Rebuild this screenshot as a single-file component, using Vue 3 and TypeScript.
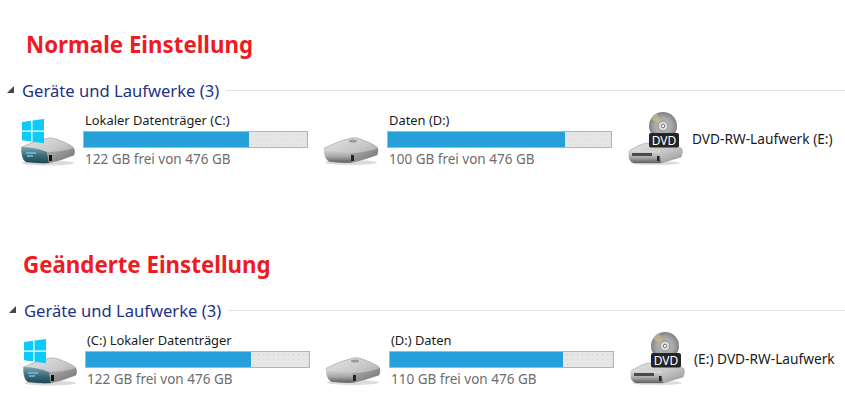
<script setup lang="ts">
type Drive = { icon: 'win' | 'hdd' | 'dvd'; name: string; free?: string; pct?: number }
type Section = { title: string; drives: Drive[]; cls: string }
const sections: Section[] = [
  { title: 'Normale Einstellung', cls: 'normal', drives: [
    { icon: 'win', name: 'Lokaler Datenträger (C:)', free: '122 GB frei von 476 GB', pct: 74 },
    { icon: 'hdd', name: 'Daten (D:)', free: '100 GB frei von 476 GB', pct: 79.400 },
    { icon: 'dvd', name: 'DVD-RW-Laufwerk (E:)' },
  ] },
  { title: 'Geänderte Einstellung', cls: 'changed', drives: [
    { icon: 'win', name: '(C:) Lokaler Datenträger', free: '122 GB frei von 476 GB', pct: 74 },
    { icon: 'hdd', name: '(D:) Daten', free: '110 GB frei von 476 GB', pct: 77.500 },
    { icon: 'dvd', name: '(E:) DVD-RW-Laufwerk' },
  ] },
]
</script>

<template>
  <div class="page">
    <svg width="0" height="0" class="defs" aria-hidden="true">
      <defs>
        <linearGradient id="hddTop" x1="0" y1="0" x2="1" y2="1">
          <stop offset="0" stop-color="#e6e6e6" /><stop offset=".55" stop-color="#c6c6c6" /><stop offset="1" stop-color="#939393" />
        </linearGradient>
        <linearGradient id="hddFront" x1="0" y1="0" x2="0" y2="1">
          <stop offset="0" stop-color="#dcdcdc" /><stop offset=".55" stop-color="#a8a8a8" /><stop offset="1" stop-color="#5e5e5e" />
        </linearGradient>
        <linearGradient id="hddSide" x1="0" y1="0" x2="1" y2="1">
          <stop offset="0" stop-color="#b4b4b4" /><stop offset="1" stop-color="#6c6c6c" />
        </linearGradient>
        <linearGradient id="winFront" x1="0" y1="0" x2="0" y2="1">
          <stop offset="0" stop-color="#7fa5b0" /><stop offset=".5" stop-color="#3f6e7c" /><stop offset="1" stop-color="#1f4653" />
        </linearGradient>
        <radialGradient id="disc" cx=".5" cy=".5" r=".55">
          <stop offset="0" stop-color="#c8c8c8" /><stop offset=".6" stop-color="#a4a4a4" /><stop offset="1" stop-color="#767676" />
        </radialGradient>
      </defs>
    </svg>

    <section v-for="s in sections" :key="s.title" class="section" :class="s.cls">
      <h1 class="headline">{{ s.title }}</h1>
      <div class="group">
        <span class="arrow"></span>
        <span class="group-name">Geräte und Laufwerke (3)</span>
        <span class="rule"></span>
      </div>
      <div class="drives">
        <div v-for="d in s.drives" :key="d.name" class="drive">
          <svg v-if="d.icon === 'win'" class="icon" width="56" height="54" viewBox="0 0 56 54">
            <ellipse cx="28" cy="51" rx="26" ry="2.500" fill="#000" opacity=".14" />
            <path d="M1.500 35 Q14 29 28 26 Q32 25.500 36 27 Q46 30 53 35 Q55.500 38 54 43 Q42 48 29 51 Q16 51.500 6 50 Q1 47 1.500 35 Z" fill="url(#hddTop)" stroke="#8c8c8c" stroke-width=".5" />
            <path d="M1.500 35 Q14 35 27 40 L29 51 Q16 51.500 6 50 Q1 47 1.500 35 Z" fill="url(#winFront)" />
            <path d="M27 40 Q42 40 54 36 Q55 40 54 43 Q42 48 29 51 Z" fill="url(#hddSide)" />
            <rect x="29" y="43" width="3" height="6" fill="#111" />
            <path d="M6 41 h10 M7 44 h6" stroke="#6cc4e4" stroke-width="1.300" />
            <path d="M2 10 L11 8.800 V18.500 H2 Z M12.500 8.500 L24 7 V18.500 H12.500 Z M2 19.800 H11 V29.500 L2 28.300 Z M12.500 19.800 H24 V31.300 L12.500 29.800 Z" fill="#0ccbfb" />
          </svg>
          <svg v-else-if="d.icon === 'hdd'" class="icon" width="56" height="54" viewBox="0 0 56 54">
            <ellipse cx="27" cy="50.500" rx="26" ry="2.500" fill="#000" opacity=".14" />
            <path d="M0.500 36 Q14 29 27 26 Q32 25 36 27 Q46 30 53 35 Q55 38 53 43 Q42 47 28 50.500 Q15 51 5 49.500 Q0 46 0.500 36 Z" fill="url(#hddTop)" stroke="#8c8c8c" stroke-width=".5" />
            <path d="M0.500 37 Q14 37 26 41 L28 50.500 Q15 51 5 49.500 Q0 46 0.500 37 Z" fill="url(#hddFront)" />
            <path d="M26 41 Q42 41 54 36 Q54.500 40 53 43 Q42 47 28 50.500 Z" fill="url(#hddSide)" />
            <rect x="27" y="43" width="3" height="6" fill="#222" />
            <ellipse cx="29" cy="29" rx="4" ry="1.500" fill="#9a9a9a" />
          </svg>
          <svg v-else class="icon" width="56" height="54" viewBox="0 0 56 54">
            <ellipse cx="27" cy="51" rx="25" ry="2" fill="#000" opacity=".14" />
            <circle cx="35" cy="14" r="14" fill="url(#disc)" />
            <path d="M35 14 L23 7 A14 14 0 0 1 29 1.500 Z" fill="#c9b98a" opacity=".75" />
            <circle cx="35" cy="14" r="5" fill="#dedede" stroke="#8a8a8a" />
            <circle cx="35" cy="14" r="1.800" fill="#fff" stroke="#777" />
            <path d="M1 39 Q10 33 18 31 H46 L54 37 Q55 41 53 45 L33 51 H6 Q1 49 1 45 Z" fill="url(#hddTop)" stroke="#8c8c8c" stroke-width=".5" />
            <path d="M1 39 H32 L33 51 H6 Q1 49 1 45 Z" fill="url(#hddFront)" />
            <path d="M4 41 H24 V44 H4 Z" fill="#4a4a4a" />
            <rect x="29" y="44" width="2.500" height="5" fill="#222" />
            <rect x="21" y="21" width="30" height="14.500" rx="2" fill="#242424" />
            <text x="36" y="33" text-anchor="middle" class="dvd-label">DVD</text>
          </svg>
          <div v-if="d.pct !== undefined" class="info">
            <div class="name">{{ d.name }}</div>
            <div class="bar"><div class="fill" :style="{ width: d.pct + '%' }"></div></div>
            <div class="free">{{ d.free }}</div>
          </div>
          <div v-else class="name solo">{{ d.name }}</div>
        </div>
      </div>
    </section>
  </div>
</template>

<style>
html, body { margin: 0; background: #fff; }
</style>

<style scoped>
.page {
  width: 845px;
  height: 400px;
  overflow: hidden;
  background: #fff;
  font-family: "Noto Sans", "Open Sans", sans-serif;
}
.defs { position: absolute; }
.section { display: flex; flex-direction: column; }
.normal { padding: 30px 0 0 7px; height: 220px; box-sizing: border-box; }
.changed { padding: 30px 0 0 9px; }
.headline {
  margin: 0;
  height: 30px;
  line-height: 30px;
  font-size: 22.300px;
  font-weight: 700;
  color: #ed1c24;
}
.normal .headline { padding-left: 19px; }
.changed .headline { padding-left: 14px; }
.group {
  display: flex;
  align-items: center;
  height: 24px;
  margin-top: 18px;
}
.arrow {
  width: 0;
  height: 0;
  margin-top: -1px;
  border-left: 7px solid transparent;
  border-bottom: 7px solid #454545;
}
.group-name {
  margin-left: 8px;
  font-size: 16.600px;
  color: #1e3287;
  white-space: nowrap;
}
.rule { flex: 1; height: 1px; margin-left: 7px; background: #e2e2e2; }
.drives { display: flex; margin: 9px 0 0 13px; }
.drive {
  flex: 0 0 304px;
  display: flex;
  align-items: flex-start;
  gap: 7px;
}
.icon { flex: none; margin-top: 1px; overflow: visible; }
.info { width: 225px; }
.name {
  height: 18px;
  line-height: 18px;
  padding-left: 2px;
  font-size: 12.900px;
  color: #1a1a1a;
  white-space: nowrap;
}
.solo { padding-left: 0; font-size: 13.700px; margin: 19px 0 0 1px; }
.bar {
  height: 17px;
  margin-top: 2px;
  box-sizing: border-box;
  border: 1px solid #b4b4b4;
  background-color: #e6e6e6;
  background-image: radial-gradient(circle, #d2d2d2 0.6px, transparent 0.8px);
  background-size: 5px 5px;
}
.fill { height: 100%; background: #26a0da; }
.free {
  margin-top: 2px;
  padding-left: 2px;
  height: 18px;
  line-height: 18px;
  font-size: 13.500px;
  color: #6d6d6d;
  white-space: nowrap;
}
.dvd-label { font: 400 12px "Noto Sans", sans-serif; fill: #fff; }
</style>
